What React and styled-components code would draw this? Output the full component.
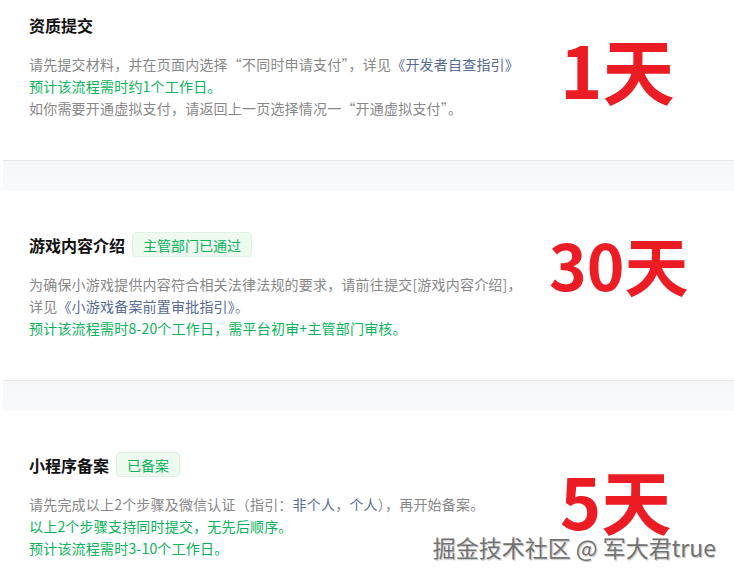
import * as React from 'react';
import styled, { createGlobalStyle } from 'styled-components';

const GlobalStyle = createGlobalStyle`
  html, body {
    margin: 0;
    padding: 0;
    background: #fff;
  }
  body {
    font-family: "Noto Sans CJK SC", "Noto Sans", sans-serif;
  }
`;

const Page = styled.div`
  position: relative;
  width: 734px;
  height: 578px;
  overflow: hidden;
  background: #fff;
`;

const List = styled.div`
  margin-left: 3px;
  display: flex;
  flex-direction: column;
`;

const Card = styled.section`
  position: relative;
  background: #fff;
  padding: ${({ $first }) => ($first ? '12px' : '41px')} 26px 41px;
  border-bottom: 1px solid #e6e7ea;
`;

const Spacer = styled.div`
  height: 30px;
  background: linear-gradient(#f6f7f9, #f9fafb);
`;

const Header = styled.div`
  display: flex;
  align-items: center;
  height: 25px;
  margin-bottom: 16px;
`;

const Title = styled.h3`
  margin: 0;
  font-size: 16px;
  font-weight: 700;
  color: #111;
  line-height: 24px;
`;

const Tag = styled.span`
  margin-left: 7px;
  height: 23px;
  padding: 0 10px;
  display: inline-flex;
  align-items: center;
  font-size: 14px;
  color: #07b35a;
  background: #eef9f0;
  border: 1px solid #dff2e4;
  border-radius: 4px;
`;

const Line = styled.div`
  font-size: 14px;
  line-height: 22px;
  letter-spacing: 0.2px;
  white-space: nowrap;
  color: ${({ $green }) => ($green ? '#07b35a' : '#888')};
`;

const Link = styled.span`
  color: #576b95;
`;

const Stamp = styled.div`
  position: absolute;
  top: ${({ $top }) => $top}px;
  left: ${({ $left }) => $left}px;
  font-size: ${({ $size }) => $size}px;
  line-height: 1;
  font-weight: 700;
  color: #ec1c24;
`;

const Watermark = styled.div`
  position: absolute;
  right: 18px;
  top: 536px;
  font-size: 23px;
  line-height: 1;
  color: #727272;
  text-shadow: 0 0 2px #fff, 1px 1px 1px rgba(0, 0, 0, 0.3);
  white-space: nowrap;
`;

export default function App() {
  return (
    <Page>
      <GlobalStyle />
      <List>
        <Card $first>
          <Header>
            <Title>资质提交</Title>
          </Header>
          <Line>
            请先提交材料，并在页面内选择“不同时申请支付”，详见<Link>《开发者自查指引》</Link>
          </Line>
          <Line $green>预计该流程需时约1个工作日。</Line>
          <Line>如你需要开通虚拟支付，请返回上一页选择情况一“开通虚拟支付”。</Line>
          <Stamp $top={32} $left={557} $size={72}>1天</Stamp>
        </Card>
        <Spacer />
        <Card>
          <Header>
            <Title>游戏内容介绍</Title>
            <Tag>主管部门已通过</Tag>
          </Header>
          <Line>为确保小游戏提供内容符合相关法律法规的要求，请前往提交[游戏内容介绍]，</Line>
          <Line>
            详见<Link>《小游戏备案前置审批指引》</Link>。
          </Line>
          <Line $green>预计该流程需时8-20个工作日，需平台初审+主管部门审核。</Line>
          <Stamp $top={40} $left={546} $size={64}>30天</Stamp>
        </Card>
        <Spacer />
        <Card>
          <Header>
            <Title>小程序备案</Title>
            <Tag>已备案</Tag>
          </Header>
          <Line>
            请先完成以上2个步骤及微信认证（指引：<Link>非个人</Link>，<Link>个人</Link>），再开始备案。
          </Line>
          <Line $green>以上2个步骤支持同时提交，无先后顺序。</Line>
          <Line $green>预计该流程需时3-10个工作日。</Line>
          <Stamp $top={54} $left={557} $size={70}>5天</Stamp>
        </Card>
      </List>
      <Watermark>掘金技术社区 @ 军大君true</Watermark>
    </Page>
  );
}
